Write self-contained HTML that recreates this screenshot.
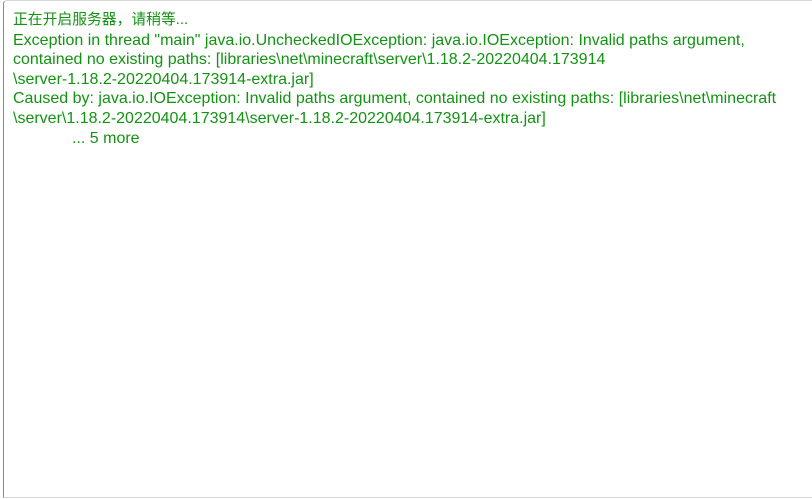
<!DOCTYPE html>
<html><head><meta charset="utf-8"><style>
html,body{margin:0;padding:0;background:#fff;width:812px;height:499px;overflow:hidden}
.box{position:absolute;left:3px;top:0;width:820px;height:498px;border-left:1px solid #8a8a8a;border-top:1px solid #d8d8d8;border-bottom:1px solid #d8d8d8;border-top-left-radius:4px;box-sizing:border-box}
.t{position:absolute;left:13px;top:10px;font-family:"Liberation Sans","Noto Sans CJK SC",sans-serif;font-size:16px;line-height:19.6px;color:#139213;white-space:nowrap}
.cjk{font-size:14.8px}
.m{padding-left:59px}
</style></head><body>
<div class="box"></div>
<div class="t"><span class="cjk">正在开启服务器，请稍等...</span><br>Exception in thread "main" java.io.UncheckedIOException: java.io.IOException: Invalid paths argument,<br>contained no existing paths: [libraries\net\minecraft\server\1.18.2-20220404.173914<br>\server-1.18.2-20220404.173914-extra.jar]<br>Caused by: java.io.IOException: Invalid paths argument, contained no existing paths: [libraries\net\minecraft<br>\server\1.18.2-20220404.173914\server-1.18.2-20220404.173914-extra.jar]<br><span class="m">... 5 more</span></div>
</body></html>
